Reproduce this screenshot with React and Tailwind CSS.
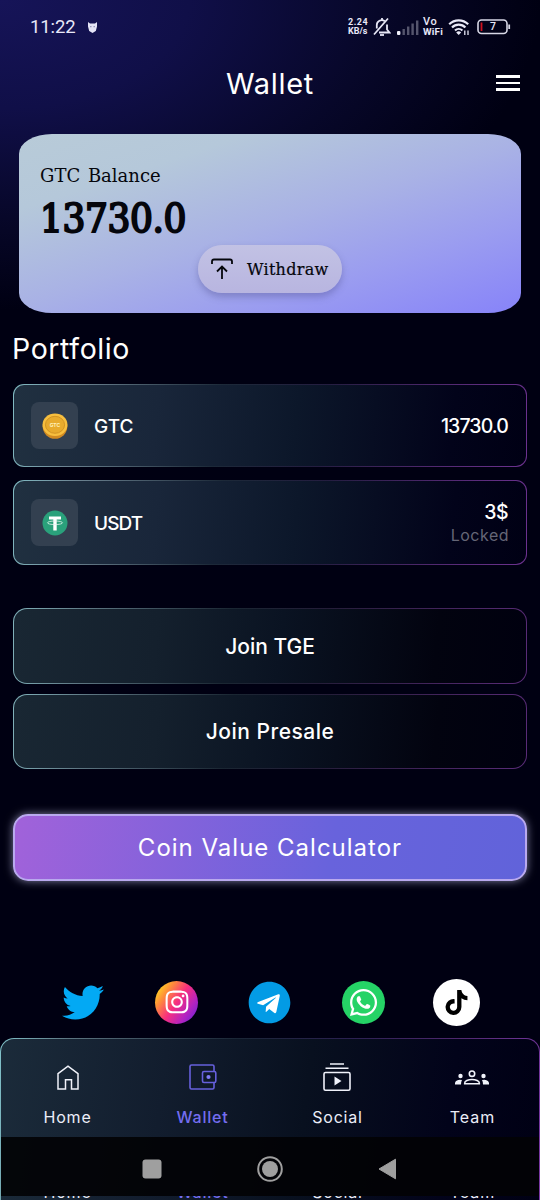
import { FaInstagram, FaTelegram, FaTiktok, FaTwitter, FaWhatsapp } from 'react-icons/fa';

const CARD_BG =
  '[background:linear-gradient(96deg,#203040_0%,#19263a_28%,#0c172a_55%,#02031a_85%,#000014_100%)_padding-box,linear-gradient(98deg,#82bcc4_0%,#6d8492_12%,#1c2938_40%,#241d40_60%,#50286f_82%,#6d3290_100%)_border-box]';
const JOIN_BG =
  '[background:linear-gradient(96deg,#192733_0%,#14202d_28%,#0a1322_52%,#02030f_82%,#00000f_100%)_padding-box,linear-gradient(98deg,#82b4bc_0%,#5f7884_14%,#1a2632_42%,#241d38_60%,#43245c_82%,#5a2c78_100%)_border-box]';

function BellOff() {
  return (
    <svg className="h-[20px] w-[18px]" viewBox="0 0 18 20" fill="none" stroke="#e6e6f5" strokeWidth="1.8" aria-hidden="true">
      <path d="M3.8 11.5V8.5a5 5 0 0 1 8-4.3M14 7.6V12.5l2.5 3H6" />
      <path d="M1 17.5 15 1.5M9 3.5V1" />
      <path d="M7 18h4" />
    </svg>
  );
}

function Signal() {
  return (
    <svg className="h-[15px] w-[22px]" viewBox="0 0 22 15" aria-hidden="true">
      <rect x="0" y="11" width="3.4" height="4" rx="1" fill="#f0f0fa" />
      <g fill="#55556d">
        <rect x="5.5" y="9" width="2.4" height="6" />
        <rect x="10" y="6.5" width="2.4" height="8.5" />
        <rect x="14.4" y="3.5" width="2.4" height="11.5" />
        <rect x="19" y="0.5" width="2.4" height="14.5" />
      </g>
    </svg>
  );
}

function WifiIcon() {
  return (
    <svg className="h-[18px] w-[23px]" viewBox="0 0 23 18" fill="none" stroke="#e9e9f7" strokeWidth="2.2" aria-hidden="true">
      <path d="M1.2 6.2a13.5 13.5 0 0 1 19 0M4 9.5a9.3 9.3 0 0 1 13.4 0M7 12.5a5.3 5.3 0 0 1 7.4 0" />
      <path d="m10.7 17-2.5-2.6a3.6 3.6 0 0 1 5 0z" fill="#e9e9f7" stroke="none" />
      <path d="M16.8 12.5v4.5M20 12.5v4.5" strokeWidth="1.3" />
    </svg>
  );
}

function Battery() {
  return (
    <svg className="h-[16px] w-[34px]" viewBox="0 0 34 16" aria-hidden="true">
      <rect x="1" y="1" width="29" height="13.5" rx="3.5" fill="none" stroke="#d8d8e6" strokeWidth="1.6" />
      <rect x="3.6" y="3.5" width="1.8" height="8.5" fill="#d0121f" />
      <path d="M32.2 5.5v4.5" stroke="#d8d8e6" strokeWidth="1.8" />
    </svg>
  );
}

function StatusBar() {
  return (
    <div className="flex h-[54px] items-center pl-[30px] pr-[29px] font-['Roboto',sans-serif] text-[#e8e8f8]">
      <span className="mt-[1px] text-[18.5px] leading-none tracking-[-0.1px]">11:22</span>
      <svg className="ml-[12px] h-[11px] w-[9px]" viewBox="0 0 9 11" fill="#e4e4f6" aria-hidden="true">
        <path d="M0 0 2 1.5h5L9 0v4.5L7.8 9 4.5 11 1.2 9 0 4.5z" />
        <path d="M2 4.7h1.5M5.5 4.7H7" stroke="#5a5a8c" strokeWidth=".7" />
      </svg>
      <div className="ml-auto flex items-center">
        <div className="w-[20px] whitespace-nowrap text-[9px] font-bold leading-[9px]">
          <p className="tracking-[0.5px]">2.24</p>
          <p>KB/s</p>
        </div>
        <span className="ml-[5px]"><BellOff /></span>
        <span className="ml-[6px]"><Signal /></span>
        <div className="ml-[4px] w-[21px] whitespace-nowrap">
          <p className="text-[11px] font-medium leading-[9px] tracking-[0.6px]">Vo</p>
          <p className="text-[9.8px] font-bold leading-[11px] tracking-[0.2px]">WiFi</p>
        </div>
        <span className="ml-[4px]"><WifiIcon /></span>
        <span className="relative ml-[6px]">
          <Battery />
          <span className="absolute left-[13px] top-[3px] text-[10.5px] font-medium leading-[10px]">7</span>
        </span>
      </div>
    </div>
  );
}

function Header() {
  return (
    <header className="relative flex h-[58px] items-center justify-center">
      <h1 className="text-[29px] font-normal leading-none tracking-[0.7px]">Wallet</h1>
      <button type="button" aria-label="Menu" className="absolute right-[20px] top-[21px] flex flex-col gap-[4px]">
        <span className="h-[2.5px] w-[24px] bg-white" />
        <span className="h-[2.5px] w-[24px] bg-white" />
        <span className="h-[2.5px] w-[24px] bg-white" />
      </button>
    </header>
  );
}

function BalanceCard() {
  return (
    <section className="mx-[19px] mt-[22px] h-[179px] rounded-[33px/20px] bg-[linear-gradient(162deg,#b8cbd8_0%,#b5c8da_22%,#a9b2e5_50%,#9a9cf0_74%,#8783f9_100%)] px-[21px] pt-[31px] font-['DejaVu_Serif',serif] text-[#05060c]">
      <p className="whitespace-nowrap text-[18px] leading-[22px] [word-spacing:2px]">GTC Balance</p>
      <p className="mt-[8px] whitespace-nowrap font-['DejaVu_Serif_Condensed','DejaVu_Serif',serif] text-[40px] leading-[46px] tracking-[-0.4px] [-webkit-text-stroke:2px_#05060c]">
        13730.0
      </p>
      <button
        type="button"
        className="mx-auto mt-[4px] flex h-[48px] w-[144px] items-center rounded-full bg-[linear-gradient(180deg,#c2c2e4,#b8b5e0)] pl-[13px] shadow-[0_4px_7px_rgba(70,70,130,0.35)]"
      >
        <svg className="h-[22px] w-[22px]" viewBox="0 0 22 22" fill="none" stroke="#05060c" strokeWidth="1.8" aria-hidden="true">
          <path d="M1 6V3.5Q1 1.5 3 1.5h16q2 0 2 2V6M11 21V8.5M6 13.5l5-5 5 5" />
        </svg>
        <span className="ml-[14px] mt-[2px] whitespace-nowrap text-[16px] leading-none tracking-[0.3px] [-webkit-text-stroke:0.2px_#05060c]">
          Withdraw
        </span>
      </button>
    </section>
  );
}

function GtcCoin() {
  return (
    <svg className="h-[26px] w-[26px]" viewBox="0 0 26 26" aria-hidden="true">
      <circle cx="13" cy="13.5" r="12.3" fill="#d18a22" />
      <ellipse cx="13" cy="11.8" rx="12.5" ry="11.3" fill="#f8bf3e" />
      <ellipse cx="13" cy="11.8" rx="9.6" ry="8.5" fill="#e8ab2d" stroke="#c98b20" strokeWidth=".8" />
      <text x="13" y="13.8" textAnchor="middle" fontSize="5" fontWeight="700" fill="#fff0b8" fontFamily="Inter, sans-serif">GTC</text>
    </svg>
  );
}

function TetherCoin() {
  return (
    <svg className="h-[26px] w-[26px]" viewBox="0 0 26 26" aria-hidden="true">
      <circle cx="13" cy="13" r="12.5" fill="#2aa17b" />
      <path d="M7 6.5h12v3h-4.3V20.5h-3.4V9.5H7z" fill="#fff" />
      <ellipse cx="13" cy="12.8" rx="7.5" ry="1.8" fill="none" stroke="#e5f5ef" strokeWidth=".8" />
    </svg>
  );
}

function CoinRow({ icon, name, nameClass = '', className, children }) {
  return (
    <div className={`mx-[13px] flex items-center rounded-[11px] border border-transparent px-[17px] ${CARD_BG} ${className}`}>
      <div className="flex h-[47px] w-[47px] items-center justify-center rounded-[8px] bg-[#334050]">{icon}</div>
      <span className={`ml-[16px] mt-[1px] text-[19px] font-medium leading-none ${nameClass}`}>{name}</span>
      <div className="ml-auto text-right">{children}</div>
    </div>
  );
}

function HomeIcon() {
  return (
    <svg className="ml-[1px] h-[26px] w-[24px]" viewBox="0 0 24 26" fill="none" stroke="#f0f2fa" strokeWidth="1.5" aria-hidden="true">
      <path d="M2 25V9.7L12 2.2l10 7.5V25h-6.5v-9.3h-6V25z" />
    </svg>
  );
}

function WalletIcon() {
  return (
    <svg className="ml-[1px] h-[26px] w-[28px]" viewBox="0 0 28 26" fill="none" stroke="#6660dc" strokeWidth="1.6" aria-hidden="true">
      <path d="M25 7.5V2.5Q25 1 23.5 1H2.5Q1 1 1 2.5v21Q1 25 2.5 25h21q1.500 0 1.500-1.500v-5" />
      <rect x="13.5" y="7.5" width="13.3" height="11" rx="1.5" />
      <circle cx="19.5" cy="13" r="2.1" fill="#817cf5" stroke="none" />
    </svg>
  );
}

function SocialIcon() {
  return (
    <svg className="-ml-[1px] h-[28px] w-[28px]" viewBox="0 0 28 28" fill="none" stroke="#f0f2fa" strokeWidth="1.6" aria-hidden="true">
      <path d="M7 1h14M2.5 5.2h23" />
      <rect x="1" y="9.5" width="26" height="17.7" rx="1.5" />
      <path d="M11.5 13.500v9l7-4.500z" fill="#f0f2fa" stroke="none" />
    </svg>
  );
}

function TeamIcon() {
  return (
    <svg className="-ml-[2px] mt-[2px] h-[16px] w-[34px]" viewBox="0 0 34 16" fill="#f0f2fa" aria-hidden="true">
      <circle cx="5.5" cy="6" r="2.2" />
      <circle cx="28.5" cy="6" r="2.2" />
      <path d="M0 14.5v-1.2q0-3 4.5-3.5l2.500.2q-1 1.5-1 4.500zM34 14.5v-1.2q0-3-4.500-3.500l-2.500.2q1 1.500 1 4.500z" />
      <g fill="none" stroke="#f0f2fa" strokeWidth="1.6">
        <circle cx="17" cy="3.7" r="2.7" />
        <path d="M9.7 13.8v-.8c0-2 3.3-3.5 7.3-3.5s7.3 1.5 7.3 3.5v.8z" />
      </g>
    </svg>
  );
}

const TABS = [
  { label: 'Home', icon: <HomeIcon />, text: 'text-[#eceef8] tracking-[0.8px]' },
  { label: 'Wallet', icon: <WalletIcon />, text: 'text-[#746df0] font-medium tracking-[0.8px]' },
  { label: 'Social', icon: <SocialIcon />, text: 'text-[#eceef8] tracking-[0.8px]' },
  { label: 'Team', icon: <TeamIcon />, text: 'text-[#eceef8] tracking-[1px]' },
];

function BottomNav() {
  return (
    <nav className="relative mt-auto h-[162px] shrink-0 overflow-hidden rounded-t-[14px] border border-b-0 border-transparent [background:linear-gradient(97deg,#1b2b3a_0%,#121d2e_30%,#08101f_56%,#02031a_82%,#000014_100%)_padding-box,linear-gradient(98deg,#82c4cc_0%,#5d7682_12%,#1a2636_42%,#2a2050_62%,#50286f_82%,#7a38a4_100%)_border-box]">
      <div className="-mx-px grid h-[98px] grid-cols-4">
        {TABS.map((tab) => (
          <div key={tab.label} className="flex flex-col items-center">
            <div className="mt-[18px] flex h-[40px] items-center justify-center">{tab.icon}</div>
            <span className={`mt-[11px] text-[16px] leading-[18px] ${tab.text}`}>{tab.label}</span>
          </div>
        ))}
      </div>
      <div className="-mx-px flex h-[59px] items-center justify-center gap-[88px] bg-[#020204]/90">
        <svg className="mt-[4px] h-[30px] w-[30px]" viewBox="0 0 30 30" aria-hidden="true">
          <rect x="5.5" y="5.5" width="19" height="19" rx="3" fill="#9f9f9f" />
        </svg>
        <svg className="mt-[4px] h-[30px] w-[30px]" viewBox="0 0 30 30" aria-hidden="true">
          <circle cx="15" cy="15" r="11.8" fill="none" stroke="#9f9f9f" strokeWidth="2" />
          <circle cx="15" cy="15" r="8" fill="#9f9f9f" />
        </svg>
        <svg className="mt-[4px] h-[30px] w-[30px]" viewBox="0 0 30 30" aria-hidden="true">
          <path d="M6 15 22.5 5.2V24.8z" fill="#9f9f9f" stroke="#9f9f9f" strokeLinejoin="round" />
        </svg>
      </div>
      {/* second row of labels peeks out under the system bar */}
      <div className="-mx-px grid h-[4px] grid-cols-4 overflow-hidden" aria-hidden="true">
        {TABS.map((tab) => (
          <span key={tab.label} className={`-mt-[13px] text-center text-[16px] leading-[18px] ${tab.text}`}>{tab.label}</span>
        ))}
      </div>
    </nav>
  );
}

export default function App() {
  return (
    <div className="flex h-[1200px] w-[540px] flex-col overflow-hidden bg-[#000012] bg-[radial-gradient(ellipse_540px_310px_at_0_0,#161458_0%,#100f48_35%,#070729_70%,#000012_100%)] font-['Inter',sans-serif] text-white">
      <StatusBar />
      <Header />
      <BalanceCard />

      <h2 className="mt-[20px] pl-[12px] text-[28.5px] font-normal leading-[32px] tracking-[0.6px]">Portfolio</h2>
      <CoinRow className="mt-[19px] h-[83px]" name="GTC" icon={<GtcCoin />}>
        <p className="mr-[1px] mt-[2px] text-[19.5px] font-medium leading-none tracking-[-0.9px]">13730.0</p>
      </CoinRow>
      <CoinRow className="mt-[13px] h-[85px]" name="USDT" nameClass="tracking-[-0.9px]" icon={<TetherCoin />}>
        <p className="mr-[1px] text-[19.5px] font-medium leading-[24px] tracking-[-0.5px]">3$</p>
        <p className="text-[16px] leading-[22px] tracking-[0.5px] text-[#656676]">Locked</p>
      </CoinRow>

      <button type="button" className={`mx-[13px] mt-[43px] h-[76px] shrink-0 rounded-[14px] border border-transparent pt-[2px] text-[21px] font-medium ${JOIN_BG}`}>
        Join TGE
      </button>
      <button type="button" className={`mx-[13px] mt-[10px] h-[75px] shrink-0 rounded-[14px] border border-transparent pt-[1px] text-[21px] font-medium tracking-[0.5px] ${JOIN_BG}`}>
        Join Presale
      </button>
      <button
        type="button"
        className="mx-[13px] mt-[45px] h-[67px] rounded-[15px] border-2 border-[#b9a9ee] bg-[linear-gradient(100deg,#a162da_0%,#6863dc_62%,#6163da_100%)] text-[24px] font-normal tracking-[1px] shadow-[0_0_9px_rgba(215,215,255,0.6)]"
      >
        Coin Value Calculator
      </button>

      <div className="mt-[97px] flex h-[48px] items-center pl-[62px]">
        <FaTwitter className="h-[43px] w-[42px] text-[#03a9f4]" />
        <span className="ml-[51px] flex h-[43px] w-[43px] items-center justify-center rounded-full bg-[linear-gradient(125deg,#ffdf1f_8%,#ff9038_26%,#f72f7e_50%,#b523c0_74%,#6a22d8_95%)]">
          <FaInstagram className="h-[26px] w-[26px]" />
        </span>
        <span className="relative ml-[50px] h-[43px] w-[43px]">
          <span className="absolute inset-[4px] rounded-full bg-white" />
          <FaTelegram className="relative h-[43px] w-[43px] text-[#039be5]" />
        </span>
        <span className="ml-[51px] flex h-[43px] w-[43px] items-center justify-center rounded-full bg-[#25d366]">
          <FaWhatsapp className="h-[31px] w-[31px]" />
        </span>
        <span className="ml-[48px] flex h-[47px] w-[47px] items-center justify-center rounded-full bg-white text-black">
          <FaTiktok className="h-[25px] w-[25px]" />
        </span>
      </div>
      <BottomNav />
    </div>
  );
}
